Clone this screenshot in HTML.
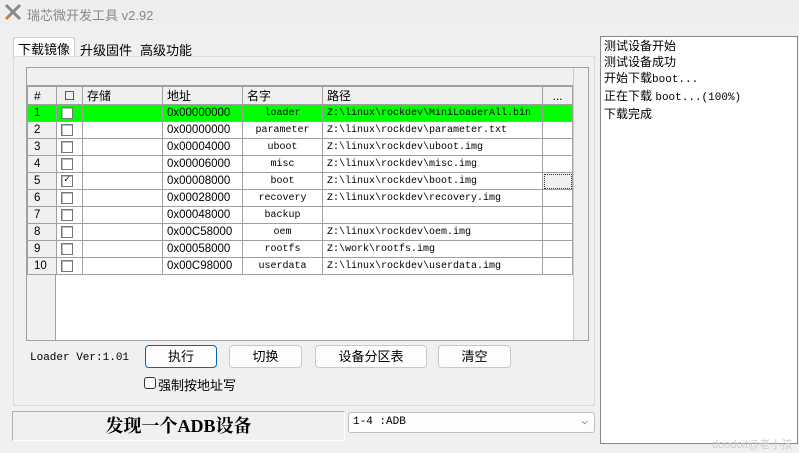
<!DOCTYPE html>
<html><head><meta charset="utf-8"><style>
*{margin:0;padding:0;box-sizing:border-box}
body{width:799px;height:453px;background:#f0f0f0;font-family:"Liberation Sans","Noto Sans CJK SC",sans-serif;font-size:12px;position:relative;overflow:hidden;color:#000}
.a{position:absolute}
.mono{font-family:"Liberation Mono","Noto Sans CJK SC",monospace}
table{border-collapse:collapse;position:absolute;left:27px;top:86px;table-layout:fixed;width:545px}
td{border:1px solid #a0a0a0;height:17px;font-size:10px;padding:0 4px;white-space:nowrap;overflow:hidden;background:#fff;font-family:"Liberation Mono",monospace}
td.n,td.s{font-family:"Liberation Sans",sans-serif;font-size:11.5px}
td.n{background:#f0f0f0;padding-left:6px}
tr.h td{background:#f0f0f0;font-size:12px;font-family:"Liberation Sans","Noto Sans CJK SC",sans-serif}
tr.g td{background:#00ff00}
tr.g td.n{background:#00ff00}
.c{text-align:center}
.cb{display:inline-block;width:12px;height:12px;border:1px solid #777;background:#fff;vertical-align:middle;box-shadow:inset 1px 1px 0 #bbb}
.btn{position:absolute;height:23px;top:345px;border:1px solid #c8c8c8;border-radius:4px;background:#fdfdfd;text-align:center;line-height:21px;font-size:13px}
</style></head><body>
<div class="a" style="left:0;top:0;width:799px;height:26px;background:#eeeeee"></div>
<svg class="a" style="left:4px;top:3px" width="18" height="18"><path d="M2 2 L16 16 M16 2 L4 14" stroke="#888" stroke-width="3"/><path d="M2 16 l4 -4" stroke="#d08030" stroke-width="3"/></svg>
<div class="a" style="left:27px;top:5px;color:#888;font-size:13px">瑞芯微开发工具 v2.92</div>
<div class="a" style="left:13px;top:37px;width:62px;height:20px;background:#fff;border:1px solid #d0d0d0;border-bottom:none"></div>
<div class="a" style="left:18px;top:39px;font-size:13px">下载镜像</div>
<div class="a" style="left:80px;top:40px;font-size:13px">升级固件</div>
<div class="a" style="left:140px;top:40px;font-size:13px">高级功能</div>
<div class="a" style="left:13px;top:56px;width:582px;height:350px;border:1px solid #dcdcdc;background:#f0f0f0"></div>
<div class="a" style="left:26px;top:67px;width:563px;height:274px;border:1px solid #a0a0a0;background:#fff"></div>
<div class="a" style="left:27px;top:68px;width:546px;height:18px;background:#f0f0f0;border-bottom:1px solid #a0a0a0"></div>
<div class="a" style="left:573px;top:68px;width:15px;height:272px;background:#f0f0f0;border-left:1px solid #ccc"></div>
<div class="a" style="left:27px;top:272px;width:29px;height:68px;background:#f0f0f0;border-right:1px solid #a0a0a0"></div>
<table>
<colgroup><col style="width:29px"><col style="width:26px"><col style="width:80px"><col style="width:80px"><col style="width:80px"><col style="width:220px"><col style="width:30px"></colgroup>
<tr class="h"><td class="n">#</td><td class="c">☐</td><td>存储</td><td>地址</td><td>名字</td><td>路径</td><td class="c">...</td></tr>
<tr class="g"><td class="n">1</td><td><span class="cb"></span></td><td></td><td class="s">0x00000000</td><td class="c">loader</td><td>Z:\linux\rockdev\MiniLoaderAll.bin</td><td></td></tr>
<tr><td class="n">2</td><td><span class="cb"></span></td><td></td><td class="s">0x00000000</td><td class="c">parameter</td><td>Z:\linux\rockdev\parameter.txt</td><td></td></tr>
<tr><td class="n">3</td><td><span class="cb"></span></td><td></td><td class="s">0x00004000</td><td class="c">uboot</td><td>Z:\linux\rockdev\uboot.img</td><td></td></tr>
<tr><td class="n">4</td><td><span class="cb"></span></td><td></td><td class="s">0x00006000</td><td class="c">misc</td><td>Z:\linux\rockdev\misc.img</td><td></td></tr>
<tr><td class="n">5</td><td><span class="cb" style="font-size:10px;line-height:10px;text-align:center">✓</span></td><td></td><td class="s">0x00008000</td><td class="c">boot</td><td>Z:\linux\rockdev\boot.img</td><td style="background:#f0f0f0;outline:1px dotted #333;outline-offset:-2px"></td></tr>
<tr><td class="n">6</td><td><span class="cb"></span></td><td></td><td class="s">0x00028000</td><td class="c">recovery</td><td>Z:\linux\rockdev\recovery.img</td><td></td></tr>
<tr><td class="n">7</td><td><span class="cb"></span></td><td></td><td class="s">0x00048000</td><td class="c">backup</td><td></td><td></td></tr>
<tr><td class="n">8</td><td><span class="cb"></span></td><td></td><td class="s">0x00C58000</td><td class="c">oem</td><td>Z:\linux\rockdev\oem.img</td><td></td></tr>
<tr><td class="n">9</td><td><span class="cb"></span></td><td></td><td class="s">0x00058000</td><td class="c">rootfs</td><td>Z:\work\rootfs.img</td><td></td></tr>
<tr><td class="n">10</td><td><span class="cb"></span></td><td></td><td class="s">0x00C98000</td><td class="c">userdata</td><td>Z:\linux\rockdev\userdata.img</td><td></td></tr>
</table>
<div class="a mono" style="left:30px;top:352px;font-size:11px">Loader Ver:1.01</div>
<div class="btn" style="left:145px;width:72px;border-color:#0067c0;border-width:1px">执行</div>
<div class="btn" style="left:229px;width:73px">切换</div>
<div class="btn" style="left:315px;width:112px">设备分区表</div>
<div class="btn" style="left:438px;width:73px">清空</div>
<div class="a" style="left:144px;top:377px;width:12px;height:12px;border:1px solid #333;border-radius:3px;background:#fff"></div>
<div class="a" style="left:158px;top:375px;font-size:13px">强制按地址写</div>
<div class="a" style="left:12px;top:411px;width:333px;height:30px;border:1px solid #b0b0b0;border-right-color:#fff;border-bottom-color:#fff;background:#f0f0f0;text-align:center;font-family:'Liberation Serif','Noto Serif CJK SC',serif;font-weight:bold;font-size:18px;line-height:28px">发现一个ADB设备</div>
<div class="a mono" style="left:348px;top:412px;width:247px;height:21px;border:1px solid #c0c0c0;border-radius:3px;background:#fdfdfd;font-size:11px;padding:3px 4px">1-4 :ADB<span style="position:absolute;right:6px;top:1px;color:#555">⌵</span></div>
<div class="a" style="left:600px;top:36px;width:198px;height:408px;border:1px solid #888;background:#fff;padding:1px 3px;font-size:12px;line-height:16px">测试设备开始<br>测试设备成功<br>开始下载<span class="mono" style="font-size:11px">boot...</span><br>正在下载 <span class="mono" style="font-size:11px">boot...(100%)</span><br>下载完成</div>
<div class="a" style="left:712px;top:436px;color:#ccc;font-size:11px">doodoit@老小孩</div>
</body></html>
